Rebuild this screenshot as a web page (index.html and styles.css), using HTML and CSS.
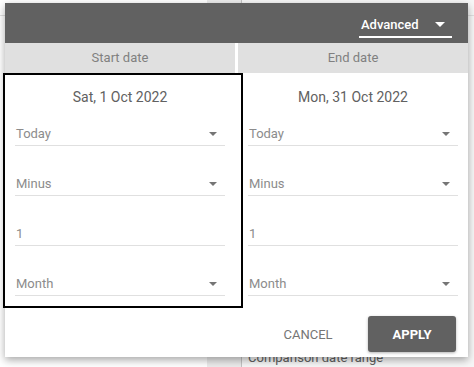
FILE: index.html
```html
<!DOCTYPE html>
<html lang="en">
<head>
  <meta charset="UTF-8" />
  <title>Date range</title>
  <link rel="stylesheet" href="styles.css">
</head>
<body>
  <div class="page">
    <div class="page-left">
      <div class="page-head"></div>
    </div>
    <div class="page-side"></div>
    <div class="page-main">
      <div class="page-head"></div>
      <p class="compare-label">Comparison date range</p>
    </div>
  </div>

  <div class="dialog">
    <div class="dialog-header">
      <div class="mode-select">
        <span>Advanced</span>
        <span class="caret caret-white"></span>
      </div>
    </div>

    <div class="columns">
      <div class="column">
        <div class="column-label">Start date</div>
        <div class="column-body">
          <div class="date-title">Sat, 1 Oct 2022</div>
          <div class="field"><span>Today</span><span class="caret"></span></div>
          <div class="field"><span>Minus</span><span class="caret"></span></div>
          <div class="field"><span>1</span></div>
          <div class="field"><span>Month</span><span class="caret"></span></div>
        </div>
      </div>
      <div class="column">
        <div class="column-label">End date</div>
        <div class="column-body">
          <div class="date-title">Mon, 31 Oct 2022</div>
          <div class="field"><span>Today</span><span class="caret"></span></div>
          <div class="field"><span>Minus</span><span class="caret"></span></div>
          <div class="field"><span>1</span></div>
          <div class="field"><span>Month</span><span class="caret"></span></div>
        </div>
      </div>
    </div>

    <div class="dialog-footer">
      <button class="cancel-button">CANCEL</button>
      <button class="apply-button">APPLY</button>
    </div>
  </div>

  <div class="highlight"></div>
</body>
</html>
```

FILE: styles.css
```css
* {
  margin: 0;
  padding: 0;
  box-sizing: border-box;
}

body {
  width: 474px;
  height: 367px;
  overflow: hidden;
  background: #fff;
  font-family: Roboto, 'Liberation Sans', sans-serif;
  position: relative;
}

/* page behind the dialog */
.page {
  display: flex;
  height: 367px;
}

.page-left {
  width: 207px;
}

.page-head {
  height: 16px;
  border-bottom: 1px solid #e0e0e0;
}

.page-side {
  width: 35px;
  background: #ececec;
  border-right: 1px solid #c4c4c4;
}

.page-main {
  flex: 1;
  display: flex;
  flex-direction: column;
  justify-content: space-between;
  background: #f7f7f7;
}

.compare-label {
  font-size: 13px;
  line-height: 16px;
  color: #616161;
  padding: 0 0 1px 6px;
}

/* dialog */
.dialog {
  position: absolute;
  left: 5px;
  top: 3px;
  width: 463px;
  height: 354px;
  background: #fff;
  box-shadow: 0 3px 8px rgba(0, 0, 0, 0.35);
  display: flex;
  flex-direction: column;
}

.dialog-header {
  height: 40px;
  background: #616161;
  display: flex;
  justify-content: flex-end;
  align-items: flex-end;
  padding: 0 16px 5px 0;
}

.mode-select {
  width: 93px;
  display: flex;
  align-items: center;
  justify-content: space-between;
  padding: 0 7px 3px 2px;
  border-bottom: 2px solid #fff;
  color: #fff;
  font-size: 13px;
  font-weight: 500;
  line-height: 17px;
}

.caret {
  width: 0;
  height: 0;
  border-left: 4.5px solid transparent;
  border-right: 4.5px solid transparent;
  border-top: 4px solid #757575;
}

.caret-white {
  border-left-width: 5px;
  border-right-width: 5px;
  border-top: 5px solid #fff;
}

.columns {
  display: grid;
  grid-template-columns: 1fr 1fr;
  column-gap: 3px;
}

.column-label {
  height: 30px;
  background: #e0e0e0;
  color: #808080;
  font-size: 13px;
  line-height: 30px;
  text-align: center;
}

.column-body {
  padding: 14px 10px 0;
}

.date-title {
  text-align: center;
  color: #616161;
  font-size: 14px;
  line-height: 20px;
}

.field {
  display: flex;
  align-items: center;
  justify-content: space-between;
  height: 25px;
  margin-top: 25px;
  padding: 1px 8px 0 1px;
  border-bottom: 1px solid #e0e0e0;
  color: #8c8c8c;
  font-size: 13px;
  line-height: 20px;
}

.date-title + .field {
  margin-top: 14px;
}

.dialog-footer {
  display: flex;
  justify-content: flex-end;
  align-items: center;
  padding: 20px 12px 5px;
}

.cancel-button {
  width: 88px;
  height: 36px;
  margin-right: 16px;
  border: none;
  background: none;
  color: #757575;
  font-family: inherit;
  font-size: 13px;
}

.apply-button {
  width: 88px;
  height: 36px;
  border: none;
  border-radius: 3px;
  background: #616161;
  color: #fff;
  font-family: inherit;
  font-size: 13px;
  font-weight: 700;
  box-shadow: 0 1px 3px rgba(0, 0, 0, 0.3);
}

/* annotation box drawn over the start column */
.highlight {
  position: absolute;
  left: 3px;
  top: 73px;
  width: 240px;
  height: 235px;
  border: 2px solid #000;
}
```
